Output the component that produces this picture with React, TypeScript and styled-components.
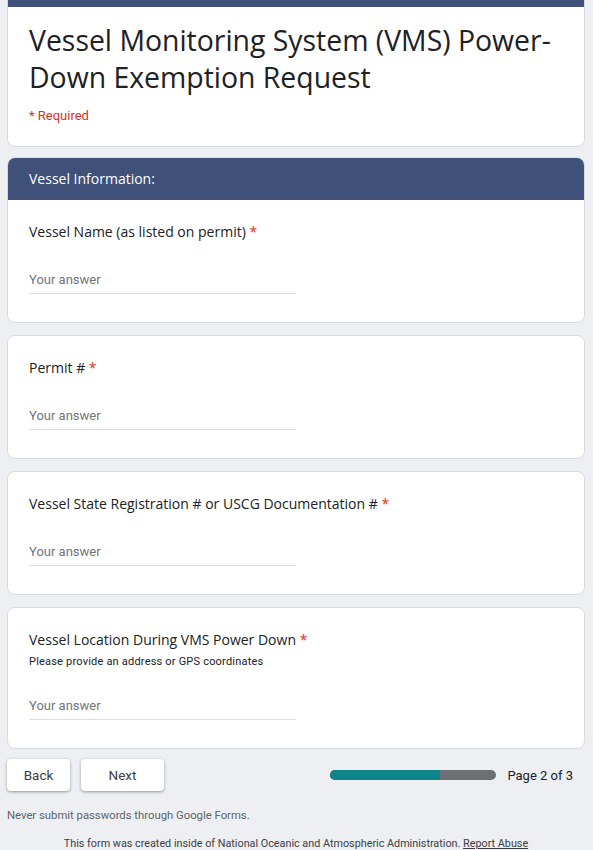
import React from "react";
import styled, { createGlobalStyle } from "styled-components";

const Global = createGlobalStyle`
  html, body { margin: 0; padding: 0; background: #edeff2; }
  body { font-family: Roboto, "Liberation Sans", sans-serif; }
`;

const Page = styled.div`
  width: 578px;
  margin: 0 0 0 7px;
  display: flex;
  flex-direction: column;
`;

const Card = styled.div`
  background: #fff;
  border-radius: 8px;
  border: 1px solid #dadce0;
  overflow: hidden;
  margin-bottom: 12px;
`;

const TitleCard = styled(Card)`
  border-top: none;
  border-radius: 0 0 8px 8px;
  margin-bottom: 10px;
`;

const TopBand = styled.div`
  height: 7px;
  background: #3f5079;
`;

const TitleBody = styled.div`
  padding: 15px 22px 23px 21px;
`;

const Title = styled.h1`
  margin: 0;
  font-family: "Open Sans", sans-serif;
  font-weight: 400;
  font-size: 28.4px;
  line-height: 37px;
  color: #202124;
`;

const Required = styled.div`
  margin-top: 12px;
  font-family: Roboto, sans-serif;
  font-size: 13px;
  line-height: 15px;
  color: #d93025;
`;

const SectionHeader = styled.div`
  background: #3f5079;
  color: #fff;
  height: 43px;
  margin: -1px -1px 0 -1px;
  display: flex;
  align-items: center;
  padding-left: 22px;
  font-family: "Open Sans", sans-serif;
  font-size: 14px;
  font-weight: 500;
`;

const Question = styled.div`
  padding: 23px 21px 28px 21px;
`;

const Label = styled.div`
  font-family: "Open Sans", sans-serif;
  font-size: 14px;
  color: #202124;
  line-height: 18px;
`;

const Star = styled.span`
  color: #d93025;
`;

const Desc = styled.div`
  font-family: Roboto, sans-serif;
  font-size: 11px;
  line-height: 13px;
  color: #202124;
  margin-top: 6px;
  letter-spacing: 0.2px;
`;

const Answer = styled.div<{ $gap: number }>`
  margin-top: ${(p) => p.$gap}px;
  width: 267px;
  border-bottom: 1px solid #dadce0;
  font-family: Roboto, sans-serif;
  font-size: 13px;
  color: #70757a;
  padding-bottom: 5px;
  line-height: 16px;
`;

const NavRow = styled.div`
  display: flex;
  align-items: center;
  height: 32px;
  margin-top: -2px;
`;

const Btn = styled.div<{ $w: number }>`
  width: ${(p) => p.$w}px;
  height: 32px;
  background: #fff;
  border-radius: 4px;
  box-shadow: 0 1px 2px rgba(60, 64, 67, 0.3), 0 1px 3px 1px rgba(60, 64, 67, 0.15);
  display: flex;
  align-items: center;
  justify-content: center;
  font-family: Roboto, sans-serif;
  font-size: 13.5px;
  font-weight: 400;
  color: #3c4043;
  margin-right: 11px;
`;

const Progress = styled.div`
  margin-left: auto;
  width: 166px;
  height: 10px;
  border-radius: 5px;
  background: #6c7075;
  overflow: hidden;
`;

const Fill = styled.div`
  height: 100%;
  background: #0b848a;
`;

const PageText = styled.div`
  font-family: Roboto, sans-serif;
  font-size: 13px;
  color: #202124;
  margin-left: 11px;
  margin-right: 12px;
`;

const Note = styled.div`
  font-family: Roboto, sans-serif;
  font-size: 11.3px;
  line-height: 13px;
  color: #5f6368;
  margin-top: 18px;
`;

const Footer = styled.div`
  font-family: Roboto, sans-serif;
  font-size: 10.8px;
  line-height: 13px;
  color: #3c4043;
  text-align: center;
  margin-top: 15px;
  a { color: #3c4043; text-decoration: underline; }
`;

type Q = { label: string; desc?: string; gap: number };

const firstQ: Q = { label: "Vessel Name (as listed on permit)", gap: 31 };
const others: Q[] = [
  { label: "Permit #", gap: 31 },
  { label: "Vessel State Registration # or USCG Documentation #", gap: 31 },
  {
    label: "Vessel Location During VMS Power Down",
    desc: "Please provide an address or GPS coordinates",
    gap: 30,
  },
];

function QuestionBlock({ q }: { q: Q }) {
  return (
    <Question>
      <Label>
        {q.label} <Star>*</Star>
      </Label>
      {q.desc && <Desc>{q.desc}</Desc>}
      <Answer $gap={q.gap}>Your answer</Answer>
    </Question>
  );
}

export default function App() {
  return (
    <>
      <Global />
      <Page>
        <TitleCard>
          <TopBand />
          <TitleBody>
            <Title>Vessel Monitoring System (VMS) Power-Down Exemption Request</Title>
            <Required>* Required</Required>
          </TitleBody>
        </TitleCard>
        <Card>
          <SectionHeader>Vessel Information:</SectionHeader>
          <QuestionBlock q={firstQ} />
        </Card>
        {others.map((q) => (
          <Card key={q.label}>
            <QuestionBlock q={q} />
          </Card>
        ))}
        <NavRow>
          <Btn $w={63}>Back</Btn>
          <Btn $w={83}>Next</Btn>
          <Progress>
            <Fill style={{ width: "66%" }} />
          </Progress>
          <PageText>Page 2 of 3</PageText>
        </NavRow>
        <Note>Never submit passwords through Google Forms.</Note>
        <Footer>
          This form was created inside of National Oceanic and Atmospheric Administration. <a>Report Abuse</a>
        </Footer>
      </Page>
    </>
  );
}
